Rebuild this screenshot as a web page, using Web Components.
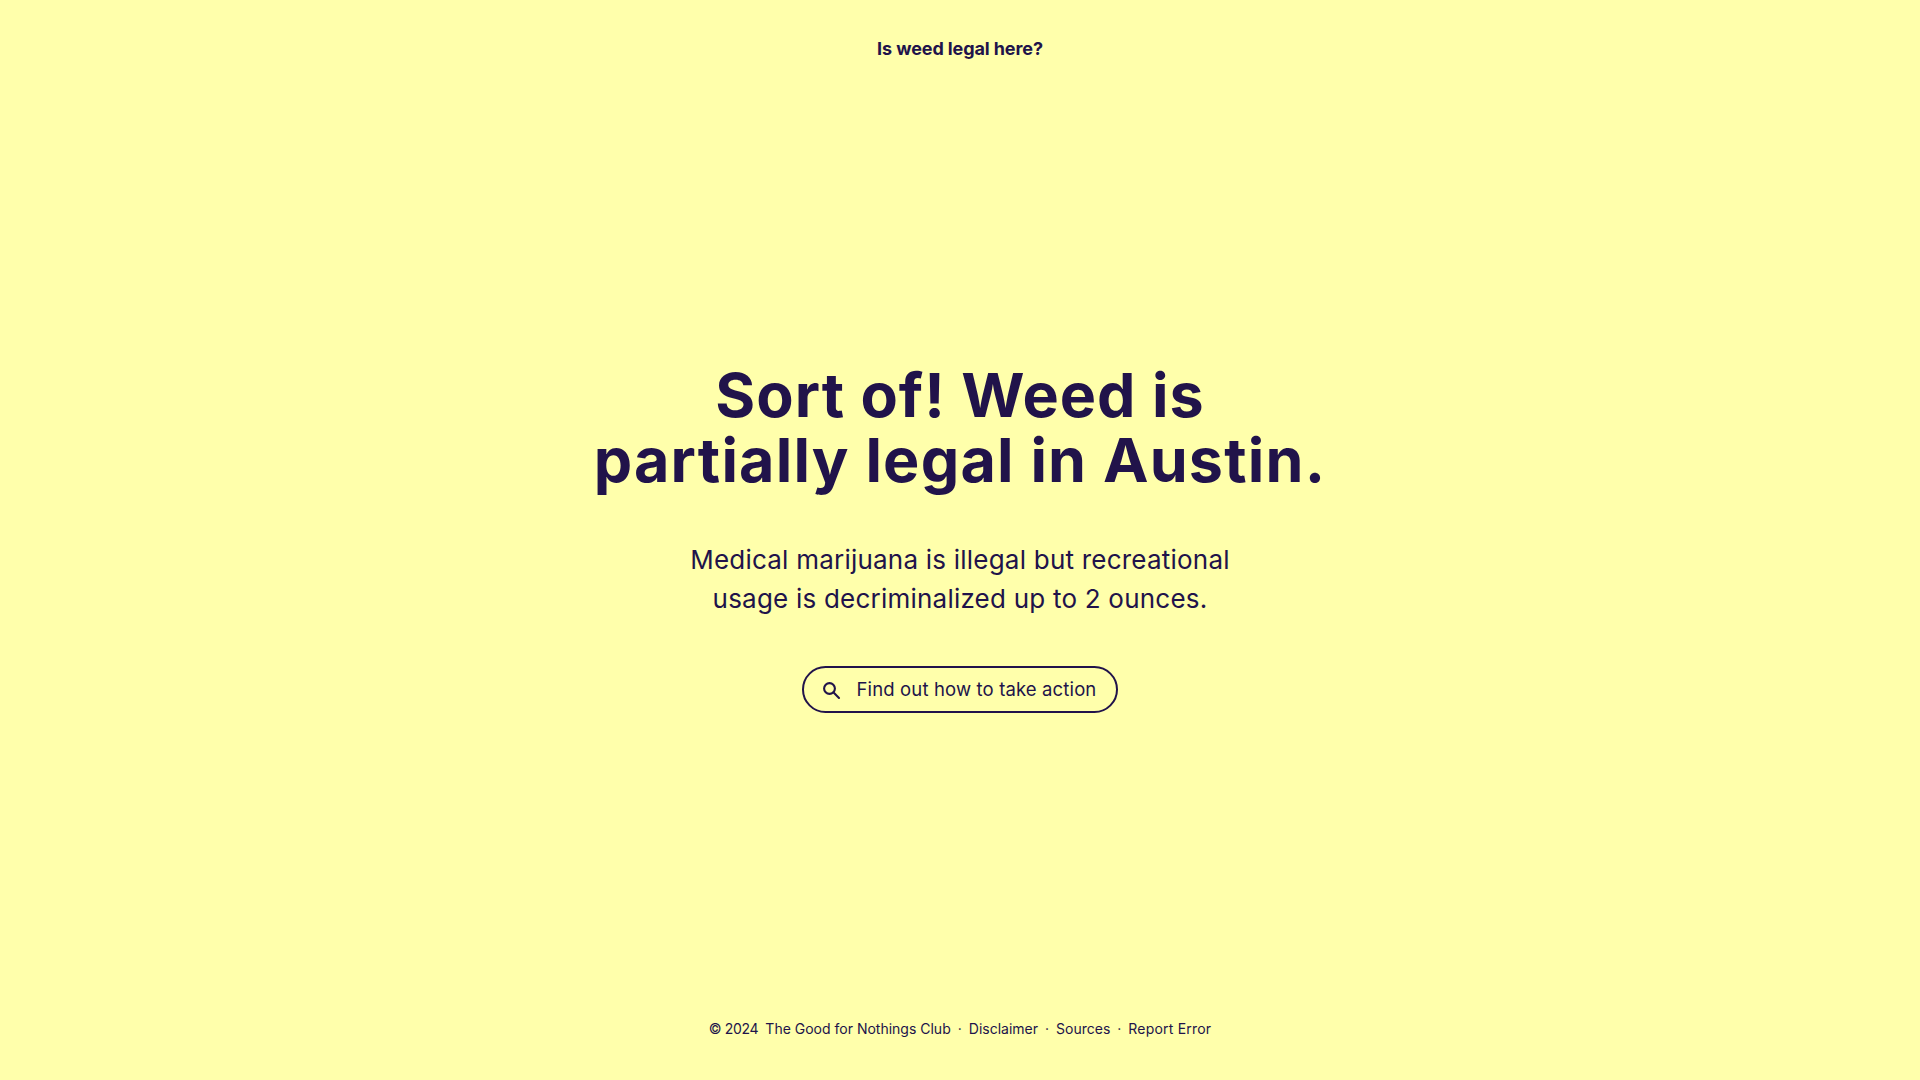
<!doctype html>
<html lang="en"><head><meta charset="utf-8"><title>Is weed legal here?</title>
<style>html,body{margin:0;height:100%;background:#ffffab}body{font-family:Inter,"Liberation Sans",sans-serif;color:#21134a}</style>
</head><body>
<legal-page>
<site-title slot="top">Is weed legal here?</site-title>
<legal-answer slot="main" >
<span slot="h1">Sort of! Weed is<br><span style="letter-spacing:1.2px">partially legal in Austin.</span></span>
<span slot="sub">Medical marijuana is illegal but recreational<br>usage is decriminalized up to 2 ounces.</span>
<action-button slot="cta">Find out how to take action</action-button>
</legal-answer>
<site-footer slot="bottom"></site-footer>
</legal-page>
<script>
const def=(n,html)=>customElements.define(n,class extends HTMLElement{constructor(){super();this.attachShadow({mode:'open'}).innerHTML=html}});
def('legal-page',`<style>:host{display:flex;flex-direction:column;height:1080px;box-sizing:border-box;align-items:center}
.top{flex:none;height:98px;display:flex;align-items:center}.main{flex:1;display:flex;align-items:center;justify-content:center}.bottom{flex:none;height:103px;display:flex;align-items:center}</style>
<div class="top"><slot name="top"></slot></div><div class="main"><slot name="main"></slot></div><div class="bottom"><slot name="bottom"></slot></div>`);
def('site-title',`<style>:host{display:block;font:700 18px/24px Inter,sans-serif;color:#21134a;letter-spacing:-.1px}</style><slot></slot>`);
def('legal-answer',`<style>:host{display:flex;flex-direction:column;align-items:center;text-align:center;color:#21134a}
h1{margin:0;font:700 61px/65px Inter,sans-serif;letter-spacing:1px}
p{margin:47px 0 48px;font:400 26px/39px Inter,sans-serif;letter-spacing:.22px}</style>
<h1><slot name="h1"></slot></h1><p><slot name="sub"></slot></p><slot name="cta"></slot>`);
def('action-button',`<style>:host{display:inline-flex;align-items:center;box-sizing:border-box;height:47px;padding:0 20px 0 16px;border:2px solid #21134a;border-radius:24px;font:400 18.5px/24px Inter,sans-serif;letter-spacing:.14px;color:#21134a;gap:13px}
svg{width:24px;height:24px;display:block;margin-top:3px}</style>
<svg viewBox="0 0 24 24" fill="none" stroke="#21134a" stroke-width="2.1" stroke-linecap="round"><circle cx="9.5" cy="9.5" r="5.4"/><path d="M13.6 13.6 19 19"/></svg><span><slot></slot></span>`);
def('site-footer',`<style>:host{display:flex;align-items:center;font:400 14px/20px Inter,sans-serif;color:#21134a;white-space:pre}
.d{margin:0 7px}.c{margin-right:7px;letter-spacing:-.3px}.r{letter-spacing:.2px}</style>
<span class="c">© 2024</span><span>The Good for Nothings Club</span><span class="d">·</span><span>Disclaimer</span><span class="d">·</span><span>Sources</span><span class="d">·</span><span class="r">Report Error</span>`);
</script>
</body></html>
